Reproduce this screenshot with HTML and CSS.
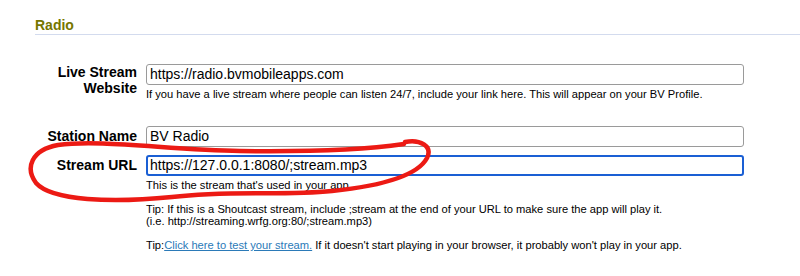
FILE: index.html
```html
<!DOCTYPE html>
<html>
<head>
<meta charset="utf-8">
<link rel="stylesheet" href="styles.css">
</head>
<body>
<div class="page">
  <h2 class="section-title">Radio</h2>
  <div class="form">
    <div class="row row-first">
      <div class="label label-two">Live Stream<br>Website</div>
      <div class="field">
        <div class="input">https://radio.bvmobileapps.com</div>
        <div class="help">If you have a live stream where people can listen 24/7, include your link here. This will appear on your BV Profile.</div>
      </div>
    </div>
    <div class="row row-station">
      <div class="label">Station Name</div>
      <div class="field">
        <div class="input">BV Radio</div>
      </div>
    </div>
    <div class="row row-url">
      <div class="label">Stream URL</div>
      <div class="field">
        <div class="input input-focus">https://127.0.0.1:8080/;stream.mp3</div>
        <div class="help">This is the stream that's used in your app.</div>
        <div class="help tip">Tip: If this is a Shoutcast stream, include ;stream at the end of your URL to make sure the app will play it.<br>(i.e. http://streaming.wrfg.org:80/;stream.mp3)</div>
        <div class="help tip tip-link">Tip:<a href="#" class="link">Click here to test your stream.</a> If it doesn't start playing in your browser, it probably won't play in your app.</div>
      </div>
    </div>
  </div>
  <svg class="scribble" width="800" height="276" viewBox="0 0 800 276">
    <path d="M405,142 C420,139 433,146 427,158 C419,173 390,185 332,191 C282,196 232,190 172,197 C112,203 52,201 36,183 C25,168 31,150 58,145 C100,139 170,150 240,151 C312,152 362,150 404,144" fill="none" stroke="#ec1a14" stroke-width="4.5" stroke-linecap="round" stroke-linejoin="round"/>
  </svg>
</div>
</body>
</html>
```

FILE: styles.css
```css
html, body {
  margin: 0;
  padding: 0;
  background: #ffffff;
}
body {
  font-family: "Liberation Sans", Arial, sans-serif;
  color: #000;
  width: 800px;
  height: 276px;
  overflow: hidden;
}
.page {
  position: relative;
  width: 800px;
  height: 276px;
}
.section-title {
  margin: 0 0 0 35px;
  padding-top: 17px;
  padding-bottom: 1px;
  font-size: 14px;
  line-height: 16px;
  font-weight: bold;
  color: #767600;
  border-bottom: 1px solid #d3dbee;
}
.form {
  display: flex;
  flex-direction: column;
}
.row {
  display: grid;
  grid-template-columns: 137px 598px;
  column-gap: 9px;
  align-items: start;
}
.row-first {
  margin-top: 29px;
}
.row-station {
  margin-top: 26px;
}
.row-url {
  margin-top: 8px;
}
.label {
  text-align: right;
  font-weight: bold;
  font-size: 14px;
  line-height: 21px;
}
.label-two {
  line-height: 16px;
}
.field {
  display: flex;
  flex-direction: column;
}
.input {
  box-sizing: border-box;
  height: 21px;
  border: 1px solid #9a9a9a;
  border-radius: 3px;
  padding: 0 3px;
  font-size: 14px;
  line-height: 19px;
  white-space: nowrap;
  overflow: hidden;
}
.input-focus {
  border: 2px solid #1a5fd4;
  padding: 0 2px;
  line-height: 17px;
}
.help {
  font-size: 11.15px;
  line-height: 12px;
  margin-top: 3px;
  white-space: nowrap;
}
.tip {
  margin-top: 12px;
}
.tip-link {
  margin-top: 12px;
}
.link {
  color: #2b7ab8;
  text-decoration: underline;
}
.scribble {
  position: absolute;
  left: 0;
  top: 0;
  pointer-events: none;
}
```
